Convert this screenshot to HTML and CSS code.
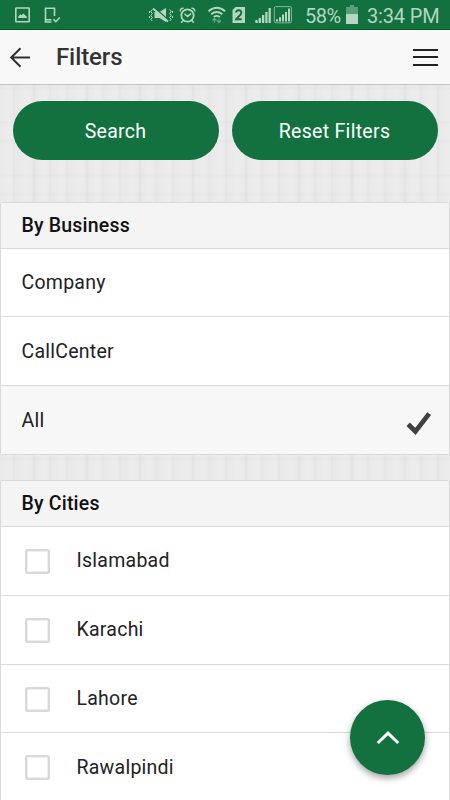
FILE: index.html
```
<!DOCTYPE html>
<html lang="en">
<head>
<meta charset="utf-8">
<meta name="viewport" content="width=device-width, initial-scale=1">
<title>Filters</title>
<link rel="stylesheet" href="styles.css">
</head>
<body>
<div class="status">
  <svg class="st-left" width="48" height="30" viewBox="14 0 48 30" fill="none" stroke="#b5d6c3" stroke-width="1.6">
    <rect x="15.8" y="8" width="13.4" height="13.8" rx=".6"/>
    <path d="M18.3 18v-1.5l2-2.2 1.3 1 1.8-1.8 3.4 3.3V18z" fill="#b5d6c3" stroke="none"/>
    <path d="M54.5 16V8.2h-9V22h6M45.5 19.7h6M53.5 19.2l2.3 2.5 4-4.2"/>
  </svg>
  <svg class="st-mid" width="148" height="30" viewBox="146 0 148 30" fill="none" stroke="#b5d6c3" stroke-width="1.5">
    <path d="M152.3 9.5l-1.5 2 1.5 2-1.5 2 1.5 2-1.5 2 1.5 1.5M149.5 11v2m0 3v2M169.7 9.5l1.5 2-1.5 2 1.5 2-1.5 2 1.5 2-1.5 1.5M172.5 11v2m0 3v2" stroke-width="1"/>
    <path d="M154.5 12h5l6.5-4v14l-6.5-4h-5z" fill="#b5d6c3" stroke="none"/>
    <path d="M154.3 7.5l14 12.5" stroke="#12713f" stroke-width="1.6"/>
    <path d="M153 8.5l15 13" stroke-width="1.8"/>
    <circle cx="187.5" cy="15.5" r="6.2" stroke-width="1.8"/>
    <path d="M184.5 13.7l3 2.7 3.6-2.8M183.2 20.5l-2 2.3M191.8 20.5l2 2.3M180.3 11.5c-.4-2.1 1.1-3.6 3.3-3.2M194.7 11.5c.4-2.1-1.1-3.6-3.3-3.2"/>
    <path d="M208.5 11.3q8.3-7 16.6 0M211.2 14.3q5.6-4.5 11.2 0M213.8 17q3-2.3 6 0" stroke-width="1.8"/>
    <path d="M214.5 22.5v-4m-2 2l2-2.2 2 2.2M219 18.5v4m-2-2l2 2.2 2-2.2" stroke="#66a883" stroke-width="1.2"/>
    <path d="M235.5 7H245v16h-12.5V10z" fill="#b5d6c3" stroke="none"/>
    <path d="M236 12.5c.3-3 5.4-3 5.4.2 0 2.4-3.6 4-5.3 6.6h5.6" stroke="#12713f" stroke-width="1.9"/>
    <path d="M256.5 23v-3M259.8 23v-5M263.1 23v-8M266.4 23V12M269.7 23V8" stroke-width="2.3"/>
    <rect x="274.3" y="6.6" width="17.2" height="16.2" rx="1.5" stroke="#82b99b" stroke-width="1"/>
    <path d="M277 21.5v-2.2M280 21.5v-4.2M283 21.5v-7M286 21.5V12M289 21.5V8.5" stroke-width="2"/>
  </svg>
  <span class="percent">58%</span>
  <svg class="battery" width="14" height="30" viewBox="0 0 14 30">
    <path d="M5 5h4v2h4v7H1V7h4z" fill="#599e79"/><path d="M1 14h12v10H1z" fill="#b5d6c3"/>
  </svg>
  <span class="time">3:34 PM</span>
</div>
<header class="bar">
  <svg class="back" width="22" height="22" viewBox="0 0 22 22" fill="none" stroke="#303030" stroke-width="2"><path d="M11.5 1.2L2.2 10.5l9.3 9.3M2 10.5h19"/></svg>
  <h1>Filters</h1>
  <div class="menu"><i></i><i></i><i></i></div>
</header>
<main>
  <div class="actions"><button>Search</button><button>Reset Filters</button></div>
  <section class="panel">
    <h2>By Business</h2>
    <div class="row">Company</div>
    <div class="row">CallCenter</div>
    <div class="row selected">All
      <svg class="tick" width="26" height="26" viewBox="0 0 26 26" fill="none" stroke="#404040" stroke-width="4.8"><path d="M2.2 14.2l7.2 7.2L23.2 3.6"/></svg>
    </div>
  </section>
  <section class="panel">
    <h2>By Cities</h2>
    <div class="row"><span class="box"></span>Islamabad</div>
    <div class="row"><span class="box"></span>Karachi</div>
    <div class="row"><span class="box"></span>Lahore</div>
    <div class="row"><span class="box"></span>Rawalpindi</div>
  </section>
</main>
<div class="fab"><svg width="26" height="18" viewBox="0 0 26 18" fill="none" stroke="#fff" stroke-width="3"><path d="M2.8 14l10.2-9.8L23.2 14"/></svg></div>
</body>
</html>
```
FILE: styles.css
```
* { box-sizing: border-box; }
body {
  margin: 0;
  height: 800px;
  overflow: hidden;
  font-family: Roboto, sans-serif;
  color: #222;
  background-color: #e9e9e9;
  background-image:
    repeating-linear-gradient(90deg, transparent 0 12px, rgba(0,0,0,.022) 14px, transparent 16px 32px, rgba(0,0,0,.03) 34px, transparent 36px 48px, rgba(0,0,0,.02) 50px, transparent 52px 53px),
    repeating-linear-gradient(180deg, transparent 0 14px, rgba(0,0,0,.02) 16px, transparent 19px 32px, rgba(0,0,0,.015) 35px, transparent 38px 53px),
    repeating-linear-gradient(90deg, rgba(255,255,255,0) 0, rgba(255,255,255,.16) 9px, rgba(255,255,255,0) 17.6px);
}
.status {
  height: 30px;
  display: flex;
  align-items: center;
  background: #12713f;
  border-bottom: 1px solid #075c20;
  color: #b5d6c3;
  font-size: 20px;
  line-height: 30px;
  white-space: nowrap;
}
.status svg { flex: none; }
.st-left { margin-left: 14px; }
.st-mid { margin-left: 84px; }
.percent { width: 40px; margin-left: 11px; padding-top: 2px; letter-spacing: -.5px; }
.battery { margin-left: 0; }
.time { margin-left: 8px; padding-top: 2px; letter-spacing: -.15px; }
.bar {
  height: 55px;
  display: flex;
  align-items: center;
  background: #f8f8f8;
  border-bottom: 1px solid #c4c4c4;
  padding: 0 12px 0 9px;
}
.back { margin-top: 1px; }
h1 { margin: 0 auto 0 25px; font-size: 24px; font-weight: 500; letter-spacing: -.1px; color: #333; }
.menu { width: 25px; display: grid; gap: 5.5px; }
.menu i { height: 2px; background: #222; }
.actions { display: flex; gap: 13px; padding: 16px 12.5px 0; height: 116.5px; }
button {
  flex: 1 1 0;
  height: 59px;
  padding: 2px 0 0;
  border: 0;
  border-radius: 29.5px;
  background: #12713f;
  color: #fff;
  font: 400 19.5px Roboto, sans-serif;
  letter-spacing: .3px;
}
.panel {
  border: 1px solid #d9d9d9;
  border-radius: 2px;
  background: #fff;
  margin-bottom: 25px;
}
h2 {
  margin: 0;
  height: 46px;
  padding-left: 20.5px;
  line-height: 46px;
  font-size: 19.5px;
  font-weight: 500;
  letter-spacing: .2px;
  color: #111;
  background: #f4f4f4;
  border-bottom: 1px solid #dadada;
}
.row {
  height: 68.8px;
  display: flex;
  align-items: center;
  padding: 0 17px 0 20.5px;
  font-size: 19.5px;
  letter-spacing: .25px;
  border-bottom: 1px solid #d9d9d9;
}
.row:last-child { height: 68px; border-bottom: 0; }
.selected { background: #f7f7f7; }
.tick { margin: 6px 0 0 auto; }
.box {
  width: 25px;
  height: 25px;
  margin: 1px 26.5px 0 3.5px;
  border: 2px solid #d9d9d9;
  box-shadow: inset 0 0 0 .5px #e0e0e0;
  border-radius: 2.5px;
}
.fab {
  position: absolute;
  left: 350px;
  top: 700px;
  width: 75px;
  height: 75px;
  border-radius: 50%;
  background: #12713f;
  box-shadow: 0 3px 7px rgba(0,0,0,.38);
  display: flex;
  align-items: center;
  justify-content: center;
}
```
